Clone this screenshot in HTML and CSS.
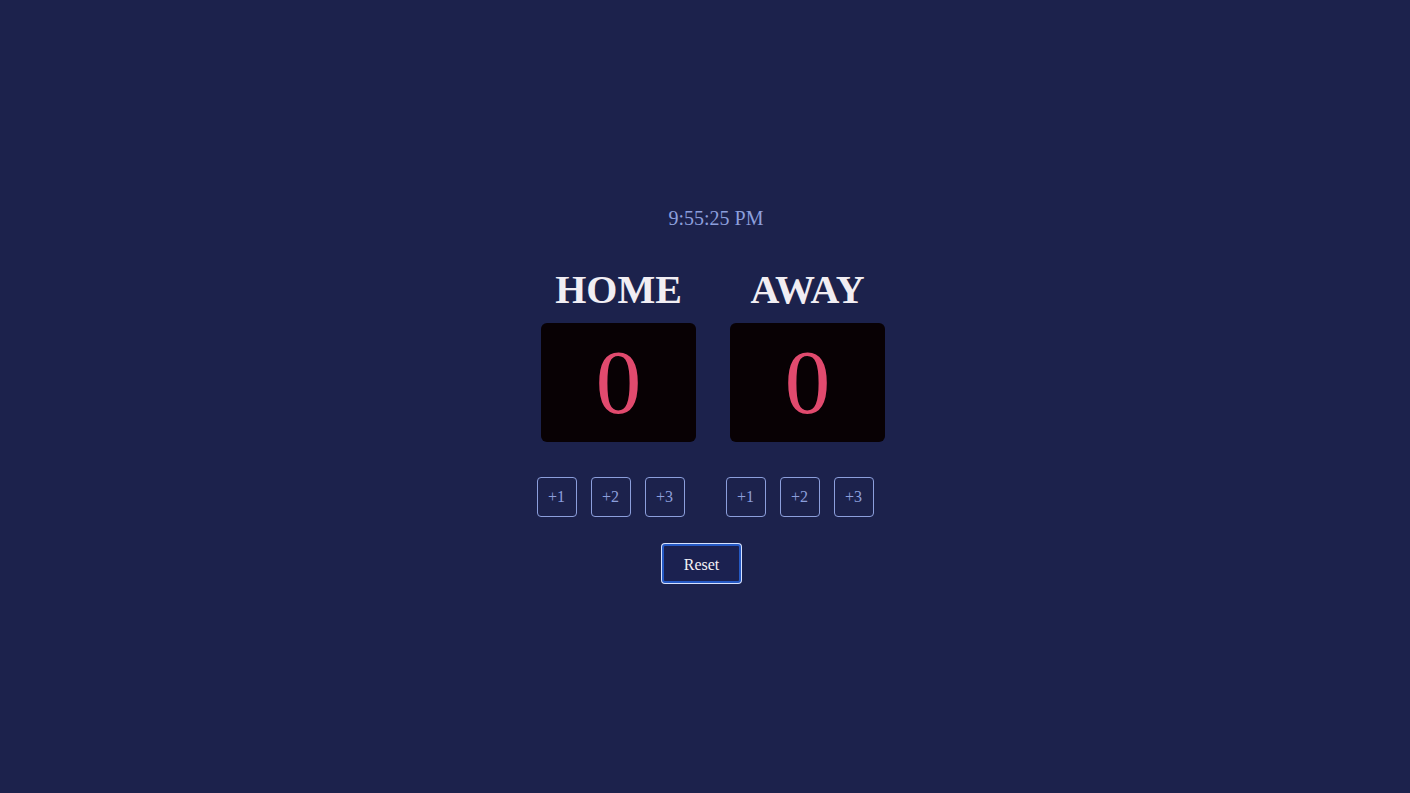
FILE: index.html
```html
<!DOCTYPE html>
<html lang="en">
<head>
<meta charset="utf-8">
<title>Scoreboard</title>
<link rel="stylesheet" href="styles.css">
</head>
<body>
<main class="app">
  <p class="clock">9:55:25 PM</p>
  <section class="board">
    <div class="team">
      <h2 class="team-name">HOME</h2>
      <div class="score">0</div>
      <div class="controls">
        <button class="add">+1</button>
        <button class="add">+2</button>
        <button class="add">+3</button>
      </div>
    </div>
    <div class="team">
      <h2 class="team-name">AWAY</h2>
      <div class="score">0</div>
      <div class="controls">
        <button class="add">+1</button>
        <button class="add">+2</button>
        <button class="add">+3</button>
      </div>
    </div>
  </section>
  <button class="reset">Reset</button>
</main>
</body>
</html>
```

FILE: styles.css
```css
html, body {
  margin: 0;
  padding: 0;
  background: #1c224c;
  font-family: "Liberation Serif", "Times New Roman", serif;
}

.app {
  min-height: 100vh;
  box-sizing: border-box;
  padding-top: 207px;
  display: flex;
  flex-direction: column;
  align-items: center;
}

.clock {
  margin: 0;
  padding-left: 22px;
  font-size: 20px;
  line-height: 22px;
  color: #8c9fdc;
}

.board {
  margin-top: 38px;
  padding-left: 16px;
  display: grid;
  grid-template-columns: 155px 155px;
  column-gap: 34px;
}

.team {
  display: flex;
  flex-direction: column;
  align-items: center;
}

.team-name {
  margin: 0;
  font-size: 40px;
  line-height: 46px;
  font-weight: bold;
  color: #f1eef3;
}

.score {
  margin-top: 10px;
  width: 155px;
  height: 119px;
  border-radius: 6px;
  background: #080104;
  color: #e14a6e;
  font-size: 91px;
  line-height: 1;
  display: flex;
  align-items: center;
  justify-content: center;
}

.controls {
  margin-top: 35px;
  width: 155px;
  box-sizing: border-box;
  padding-right: 2px;
  display: flex;
  justify-content: center;
}

.add {
  flex: none;
  width: 40px;
  height: 40px;
  margin: 0 14px 0 0;
  padding: 0;
  box-sizing: border-box;
  border: 1px solid #8c9fdc;
  border-radius: 4px;
  background: transparent;
  color: #8c9fdc;
  font-family: "Liberation Serif", "Times New Roman", serif;
  font-size: 16px;
}

.reset {
  margin-top: 27px;
  margin-right: 7px;
  width: 79px;
  height: 39px;
  box-sizing: border-box;
  padding: 2px 0 0;
  border: 2px solid #2559c4;
  border-radius: 3px;
  box-shadow: 0 0 0 1px #d6e2ff;
  background: #1b2150;
  color: #f4f2f6;
  font-family: "Liberation Serif", "Times New Roman", serif;
  font-size: 16px;
}
```
